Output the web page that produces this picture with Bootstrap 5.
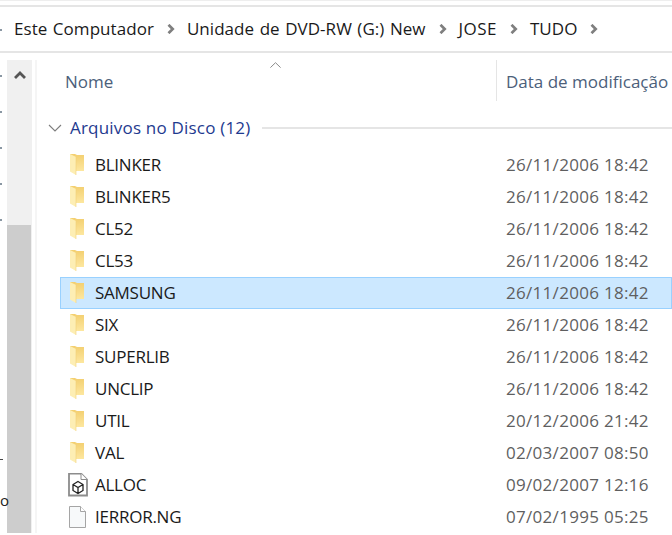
<!DOCTYPE html>
<html lang="pt"><head><meta charset="utf-8"><title>TUDO</title>
<link href="https://cdn.jsdelivr.net/npm/bootstrap@5.3.0/dist/css/bootstrap.min.css" rel="stylesheet">
<style>
html,body{height:535px;overflow:hidden;background:#fff}
body{font-family:"Open Sans","Noto Sans",sans-serif;font-size:17px;color:#1a1a1a}
.top-sliver{height:7px;border-bottom:2px solid #e5e5e5;position:relative}
.top-sliver::before{content:"";display:block;height:1px;background:#eee}
.crumbs{height:46px;border-bottom:2px solid #e5e5e5;padding-left:14px;white-space:nowrap;overflow:hidden;letter-spacing:.05px;word-spacing:1px;position:relative}
.crumbs .sep{width:9px;height:10px;margin:0 11px 0 13px;flex:none}
.crumbs .tick{position:absolute;left:0;top:22px;width:2px;height:2px;background:#8a97a3}
.crumbs .wide{letter-spacing:.45px}
.main-area{height:480px}
.left-strip{width:7px;flex:none;position:relative}
.left-strip i{position:absolute;left:0;width:2px;height:2px;background:#8a97a3;display:block}
.left-strip u{position:absolute;left:0;top:406px;width:3px;height:1px;background:#444;display:block}
.left-strip b{position:absolute;left:0;top:440px;font-weight:400;font-size:15px;line-height:1;color:#222}
.sbar{width:25px;flex:none;background:#f0f0f0;margin-top:7px;display:flex;flex-direction:column}
.sbar-track{flex:none;padding-top:10px;height:165px}
.sbar-thumb{flex:1;width:24px;background:#cdcdcd}
.edge{width:2px;flex:none;margin-left:3px;background:#f5f5f5;margin-top:7px}
.list-pane{flex:1;min-width:0;position:relative;overflow:hidden}
.head-row{height:53px;margin-top:7px;position:relative;color:#4c607a;font-size:17px}
.sort-arrow{position:absolute;left:233px;top:2px;width:11px;height:6px}
.col-name{width:459px;padding-left:28px;flex:none;padding-top:10px;line-height:24px}
.col-date{border-left:1px solid #e5e5e5;height:41px;padding-left:9px;padding-top:10px;line-height:24px;white-space:nowrap;flex:none}
.group-row{height:36px;padding:0 0 6px 11px;color:#1e3a8f;font-size:17px;letter-spacing:.2px}
.group-row .chev{width:14px;height:9px;margin-right:8px;flex:none}
.group-row .rule{flex:1;height:2px;background:#e5e5e5;margin-left:11px}
.file-row{height:32px;margin-left:23px;padding-left:7px;border:1px solid transparent;white-space:nowrap}
.file-row.picked{background:#cce8ff;border-color:#99d1ff}
.file-row svg{flex:none;width:22px;height:24px}
.file-row .fname{width:416px;flex:none;padding-left:5px;letter-spacing:-.25px}
.file-row .fdate{color:#5f5f5f;letter-spacing:.3px}
</style></head><body>
<div class="top-sliver"></div>
<div class="crumbs d-flex align-items-center">
<span class="tick"></span>
<span>Este Computador</span>
<svg class="sep" viewBox="0 0 9 10"><path d="M1.500 .8l4.200 4.200-4.200 4.200" fill="none" stroke="#7f7f7f" stroke-width="2.700"/></svg>
<span>Unidade de DVD-RW (G:) New</span>
<svg class="sep" viewBox="0 0 9 10"><path d="M1.500 .8l4.200 4.200-4.200 4.200" fill="none" stroke="#7f7f7f" stroke-width="2.700"/></svg>
<span class="wide">JOSE</span>
<svg class="sep" viewBox="0 0 9 10"><path d="M1.500 .8l4.200 4.200-4.200 4.200" fill="none" stroke="#7f7f7f" stroke-width="2.700"/></svg>
<span>TUDO</span>
<svg class="sep" viewBox="0 0 9 10"><path d="M1.500 .8l4.200 4.200-4.200 4.200" fill="none" stroke="#7f7f7f" stroke-width="2.700"/></svg>
</div>
<div class="main-area d-flex">
<div class="left-strip"><i style="top:22px"></i><i style="top:58px"></i><i style="top:94px"></i><i style="top:130px"></i><i style="top:166px"></i><u></u><b>o</b></div>
<div class="sbar"><div class="sbar-track"><svg class="d-block mx-auto" width="12" height="9" viewBox="0 0 12 9"><path d="M1 8l5-5 5 5" fill="none" stroke="#555" stroke-width="2.800"/></svg></div><div class="sbar-thumb"></div></div>
<div class="edge"></div>
<div class="list-pane">
<div class="head-row d-flex"><svg class="sort-arrow" viewBox="0 0 11 6"><path d="M.4 5.600L5.500.7l5.100 4.900" fill="none" stroke="#8a8a8a"/></svg><div class="col-name">Nome</div><div class="col-date">Data de modificação</div></div>
<div class="group-row d-flex align-items-center"><svg class="chev" viewBox="0 0 14 9"><path d="M1 1l6 6 6-6" fill="none" stroke="#7d7d7d" stroke-width="1.100"/></svg><span>Arquivos no Disco (12)</span><div class="rule"></div></div>
<svg width="0" height="0" class="position-absolute"><defs>
<linearGradient id="fb" x1="0" y1="0" x2="0" y2="1"><stop offset="0" stop-color="#f3cf70"/><stop offset="1" stop-color="#fde79f"/></linearGradient>
<g id="fld"><path d="M2 1h5l2 1h7v16H2z" fill="url(#fb)"/><path d="M2 1l6 3v18l-6-3.500z" fill="#fdeeb4"/><path d="M8 4v18" stroke="#f2d27a" stroke-width=".6"/></g></defs></svg>
<div id="rows" class="d-flex flex-column">
<div class="file-row d-flex align-items-center"><svg viewBox="0 0 22 24"><use href="#fld"/></svg><span class="fname">BLINKER</span><span class="fdate">26/11/2006 18:42</span></div>
<div class="file-row d-flex align-items-center"><svg viewBox="0 0 22 24"><use href="#fld"/></svg><span class="fname">BLINKER5</span><span class="fdate">26/11/2006 18:42</span></div>
<div class="file-row d-flex align-items-center"><svg viewBox="0 0 22 24"><use href="#fld"/></svg><span class="fname">CL52</span><span class="fdate">26/11/2006 18:42</span></div>
<div class="file-row d-flex align-items-center"><svg viewBox="0 0 22 24"><use href="#fld"/></svg><span class="fname">CL53</span><span class="fdate">26/11/2006 18:42</span></div>
<div class="file-row picked d-flex align-items-center"><svg viewBox="0 0 22 24"><use href="#fld"/></svg><span class="fname">SAMSUNG</span><span class="fdate">26/11/2006 18:42</span></div>
<div class="file-row d-flex align-items-center"><svg viewBox="0 0 22 24"><use href="#fld"/></svg><span class="fname">SIX</span><span class="fdate">26/11/2006 18:42</span></div>
<div class="file-row d-flex align-items-center"><svg viewBox="0 0 22 24"><use href="#fld"/></svg><span class="fname">SUPERLIB</span><span class="fdate">26/11/2006 18:42</span></div>
<div class="file-row d-flex align-items-center"><svg viewBox="0 0 22 24"><use href="#fld"/></svg><span class="fname">UNCLIP</span><span class="fdate">26/11/2006 18:42</span></div>
<div class="file-row d-flex align-items-center"><svg viewBox="0 0 22 24"><use href="#fld"/></svg><span class="fname">UTIL</span><span class="fdate">20/12/2006 21:42</span></div>
<div class="file-row d-flex align-items-center"><svg viewBox="0 0 22 24"><use href="#fld"/></svg><span class="fname">VAL</span><span class="fdate">02/03/2007 08:50</span></div>
<div class="file-row d-flex align-items-center"><svg viewBox="0 0 22 24"><path d="M1 .5h12l6 6v16H1z" fill="#fff" stroke="#8c8c8c" stroke-width="1.800"/><path d="M13 .5v6h6" fill="#fff" stroke="#8c8c8c"/><path d="M10 8.500l5 3v6l-5 3-5-3v-6zM5 11.500l5 3 5-3M10 14.500v6" fill="none" stroke="#222" stroke-width="1.300"/></svg><span class="fname">ALLOC</span><span class="fdate">09/02/2007 12:16</span></div>
<div class="file-row d-flex align-items-center"><svg viewBox="0 0 22 24"><path d="M1.500 1.500h11l5 5v16h-16z" fill="#f7f9fa" stroke="#a5a5a5"/><path d="M12.500 1.500v5h5" fill="#fff" stroke="#a5a5a5"/></svg><span class="fname">IERROR.NG</span><span class="fdate">07/02/1995 05:25</span></div>
</div>
</div>
</div>
</body></html>
